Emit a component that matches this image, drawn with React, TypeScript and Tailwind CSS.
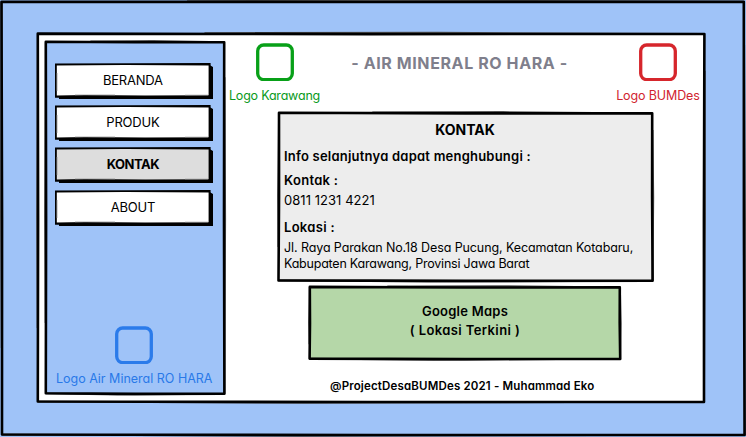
import type { ReactNode } from "react";

type Corners = [number, number][];

/* Hand-drawn outline: a solid stroke with a lighter, slightly offset second pass. */
function Sketch({ corners, width = 2.6 }: { corners: Corners; width?: number }) {
  const [a, b, c, d] = corners;
  const mid = (p: number[], q: number[], t: number, dx: number, dy: number) =>
    `${p[0] + (q[0] - p[0]) * t + dx} ${p[1] + (q[1] - p[1]) * t + dy}`;
  const solid = `M${a} L${mid(a, b, 0.5, 0, 0.3)} L${b} L${mid(b, c, 0.5, -0.3, 0)} L${c} L${mid(c, d, 0.5, 0, 0.3)} L${d} L${mid(d, a, 0.5, 0.3, 0)} Z`;
  const light = `M${mid(a, b, 0.25, 0, -0.6)} L${mid(a, b, 0.6, 0, -1.1)} L${b} M${mid(b, c, 0.1, 0.3, 0)} L${mid(b, c, 0.5, 0.9, 0)} L${c} M${mid(c, d, 0.2, 0, 0.3)} L${mid(c, d, 0.6, 0, 1.1)} L${d} M${mid(d, a, 0.2, -0.2, 0)} L${mid(d, a, 0.5, -0.8, 0)} L${a}`;
  return (
    <svg className="pointer-events-none absolute inset-0 h-full w-full overflow-visible" aria-hidden="true">
      <path d={light} fill="none" stroke="#555" strokeWidth={1.8} />
      <path d={solid} fill="none" stroke="#000" strokeWidth={width} strokeLinejoin="round" />
    </svg>
  );
}

function NavButton({ children, active = false }: { children: ReactNode; active?: boolean }) {
  return (
    <button className="relative flex h-9 w-[158px] justify-center pr-[3px] text-[13px] leading-[34px] text-black last:mt-px">
      <svg className="absolute inset-0 h-full w-full" aria-hidden="true">
        <path d="M4 4 L155 2.2 L158 4 L158 36 L4 36 Z" fill="#000" />
        <path d="M0 0.4 L155.6 0 L155.6 35 L0 34.8 Z" fill="#000" />
        <path d="M1.8 2.4 L70 2 L153.6 2.5 L153.6 32.2 L90 32.6 L30 32 L1.8 32.4 Z" fill={active ? "#dddddd" : "#ffffff"} />
        <path d="M2 10 V28 M20 32 H60 M130 32.2 H153" stroke="#888" strokeWidth="0.7" />
      </svg>
      <span className={active ? "relative font-bold tracking-[-0.5px]" : "relative tracking-[-0.2px]"}>{children}</span>
    </button>
  );
}

function LogoBox({ color }: { color: string }) {
  return (
    <svg width="38" height="38" viewBox="0 0 38 38" fill="none" stroke={color} strokeWidth="3.3" aria-hidden="true">
      <rect x="1.7" y="2" width="34.6" height="34.6" rx="6" />
    </svg>
  );
}

export default function App() {
  return (
    <div className="relative h-[437px] w-[746px] bg-[#9fc3f8] pt-[33px] pl-[37px] font-['Inter','Liberation_Sans',sans-serif] text-black [font-feature-settings:'cv11']">
      <Sketch corners={[[1.5, 1.7], [743.8, 1.7], [744.6, 435], [2, 434.5]]} />
      <main className="relative flex h-[369px] w-[668px] bg-white pt-[8px] pl-[8px]">
        <Sketch corners={[[0.8, 0.6], [667.4, 1], [667, 369], [0.8, 368.5]]} />

        <aside className="relative flex h-[353px] w-[180px] flex-col bg-[#9fc3f8] pt-[22px] pl-[10.4px]">
          <Sketch corners={[[0.8, 0.8], [179.2, 1.2], [179.4, 352.8], [0.8, 352.3]]} />
          <nav className="relative flex flex-col gap-[6px]">
            <NavButton>BERANDA</NavButton>
            <NavButton>PRODUK</NavButton>
            <NavButton active>KONTAK</NavButton>
            <NavButton>ABOUT</NavButton>
          </nav>
          <div className="relative mt-auto mb-[5px] -ml-[10px] flex flex-col items-center pr-[2px] text-[#2979e8]">
            <LogoBox color="#2b7bea" />
            <span className="mt-[5px] text-[12.5px] leading-5 whitespace-nowrap">Logo Air Mineral RO HARA</span>
          </div>
        </aside>

        <section className="flex w-[480px] flex-col">
          <header className="flex h-[71px] items-start justify-between pt-[2px] pl-[4px]">
            <div className="flex w-[91px] flex-col items-center text-[#0a9a1c]">
              <LogoBox color="#08a018" />
              <span className="mt-[5px] text-[12.5px] leading-5 tracking-[-0.2px] whitespace-nowrap">Logo Karawang</span>
            </div>
            <h1 className="mt-[10px] pr-[17px] text-[16px] leading-5 font-bold tracking-[0.6px] whitespace-nowrap text-[#7f7f8c]">
              - AIR MINERAL RO HARA -
            </h1>
            <div className="mr-[5px] flex w-[84px] flex-col items-center text-[#d12430]">
              <LogoBox color="#d6262c" />
              <span className="mt-[5px] text-[12.5px] leading-5 tracking-[-0.12px] whitespace-nowrap">Logo BUMDes</span>
            </div>
          </header>

          <article className="relative ml-[53px] h-[170px] w-[375px] bg-[#ededed] pt-[8px] pl-[6px] whitespace-nowrap">
            <Sketch corners={[[1, 0.8], [374.2, 1.3], [374.6, 168.8], [0.5, 168.4]]} />
            <h2 className="-ml-[7px] text-center text-[14px] leading-5 font-bold">KONTAK</h2>
            <p className="mt-[6px] text-[13px] leading-5 font-semibold tracking-[0.22px]">Info selanjutnya dapat menghubungi :</p>
            <h3 className="mt-[4px] text-[13px] leading-5 font-semibold tracking-[0.3px]">Kontak :</h3>
            <p className="text-[13px] leading-5 tracking-[0.05px]">0811 1231 4221</p>
            <h3 className="mt-[7px] text-[13px] leading-5 font-semibold tracking-[0.3px]">Lokasi :</h3>
            <p className="mt-[3px] text-[12.5px] leading-4 tracking-[-0.1px]">
              Jl. Raya Parakan No.18 Desa Pucung, Kecamatan Kotabaru,
              <span className="block tracking-[-0.22px]">Kabupaten Karawang, Provinsi Jawa Barat</span>
            </p>
          </article>

          <div className="relative mt-[4px] ml-[84px] h-[74px] w-[312px] bg-[#b5d7a8] pt-[16px] text-center text-[13px] leading-[19px] font-semibold">
            <Sketch corners={[[0.8, 0.9], [310.8, 1.4], [311.2, 73], [0.6, 72.6]]} />
            <p className="tracking-[0.25px]">Google Maps</p>
            <p className="tracking-[0.4px]">( Lokasi Terkini )</p>
          </div>

          <footer className="mt-[16px] ml-[105px] text-[11.5px] leading-5 font-semibold tracking-[0.16px] whitespace-nowrap">
            @ProjectDesaBUMDes 2021 - Muhammad Eko
          </footer>
        </section>
      </main>
    </div>
  );
}
